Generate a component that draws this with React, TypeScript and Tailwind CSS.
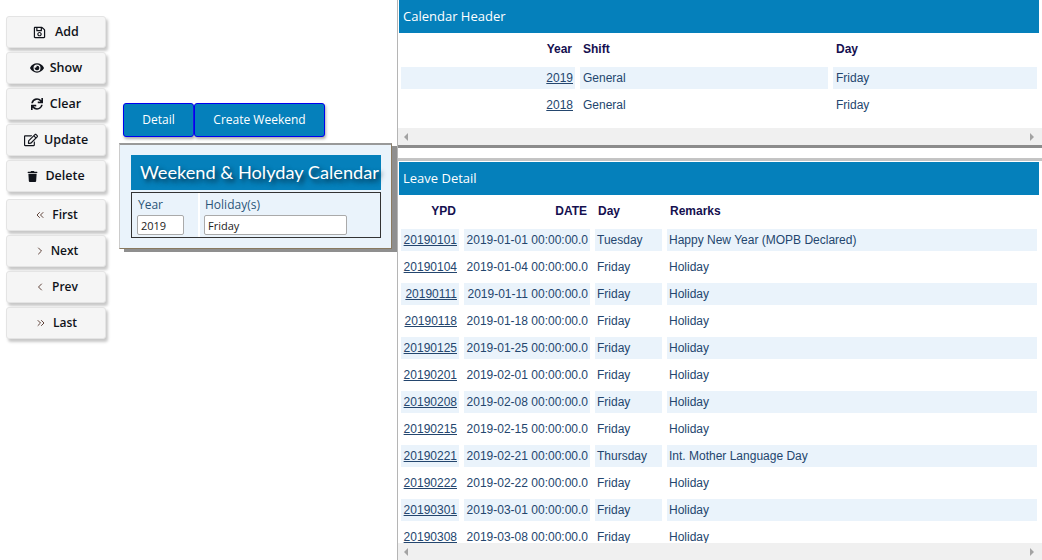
import React from "react";
import { FaRegSave, FaEye, FaSync, FaRegEdit, FaTrash } from "react-icons/fa";
import { ChevronsLeft, ChevronRight, ChevronLeft, ChevronsRight } from "lucide-react";

const firstButtons = [
  { label: "Add", icon: <FaRegSave size={13} />, gap: "gap-[9px]", size: "text-[12.5px]" },
  { label: "Show", icon: <FaEye size={14} />, gap: "gap-[6px]", size: "text-[12.5px]" },
  { label: "Clear", icon: <FaSync size={12} />, gap: "gap-[7px]", size: "text-[12.5px]" },
  { label: "Update", icon: <FaRegEdit size={14} />, gap: "gap-[6px]", size: "text-[12.5px]" },
  { label: "Delete", icon: <FaTrash size={11} />, gap: "gap-[7px]", size: "text-[12.5px]" },
];

const navButtons = [
  { label: "First", icon: <ChevronsLeft size={12} strokeWidth={1.75} className="text-[#4a2a20]" />, gap: "gap-[6px]", size: "text-[12px]" },
  { label: "Next", icon: <ChevronRight size={12} strokeWidth={1.75} className="text-[#4a2a20]" />, gap: "gap-[5px]", size: "text-[12px]" },
  { label: "Prev", icon: <ChevronLeft size={12} strokeWidth={1.75} className="text-[#4a2a20]" />, gap: "gap-[6px]", size: "text-[12px]" },
  { label: "Last", icon: <ChevronsRight size={12} strokeWidth={1.75} className="text-[#4a2a20]" />, gap: "gap-[6px]", size: "text-[12px]" },
];

const leaves = [
  ["20190101", "2019-01-01 00:00:00.0", "Tuesday", "Happy New Year (MOPB Declared)"],
  ["20190104", "2019-01-04 00:00:00.0", "Friday", "Holiday"],
  ["20190111", "2019-01-11 00:00:00.0", "Friday", "Holiday"],
  ["20190118", "2019-01-18 00:00:00.0", "Friday", "Holiday"],
  ["20190125", "2019-01-25 00:00:00.0", "Friday", "Holiday"],
  ["20190201", "2019-02-01 00:00:00.0", "Friday", "Holiday"],
  ["20190208", "2019-02-08 00:00:00.0", "Friday", "Holiday"],
  ["20190215", "2019-02-15 00:00:00.0", "Friday", "Holiday"],
  ["20190221", "2019-02-21 00:00:00.0", "Thursday", "Int. Mother Language Day"],
  ["20190222", "2019-02-22 00:00:00.0", "Friday", "Holiday"],
  ["20190301", "2019-03-01 00:00:00.0", "Friday", "Holiday"],
  ["20190308", "2019-03-08 00:00:00.0", "Friday", "Holiday"],
];

const ActionButton = ({ label, icon, gap, size }: { label: string; icon: React.ReactNode; gap: string; size: string }) => (
  <button className={`w-[100px] h-[32px] flex items-center justify-center ${gap} ${size} bg-[#f5f5f5] border border-[#e4e4e4] rounded-[3px] shadow-[2px_3px_3px_#c8c8c8] font-semibold text-[#10131a]`}>
    {icon}
    <span>{label}</span>
  </button>
);

const Cell = ({ children, shaded, right }: { children: React.ReactNode; shaded: boolean; right?: boolean }) => (
  <div className={`h-[22px] flex items-center whitespace-nowrap px-[2px] text-[#24466e] ${right ? "justify-end" : ""} ${shaded ? "bg-[#eaf3fb]" : ""}`}>
    {children}
  </div>
);

const HeadCell = ({ children, right }: { children: React.ReactNode; right?: boolean }) => (
  <div className={`h-[29px] pt-[2px] flex items-center px-[3px] font-bold text-[#15104f] ${right ? "justify-end" : ""}`}>
    {children}
  </div>
);

const Scrollbar = () => (
  <div className="h-[17px] bg-[#f0f0f0] flex items-center justify-between pl-[6px] pr-[8px]">
    <div className="w-0 h-0 border-y-[4px] border-y-transparent border-r-[4px] border-r-[#a3a3a3]" />
    <div className="w-0 h-0 border-y-[4px] border-y-transparent border-l-[4px] border-l-[#a3a3a3]" />
  </div>
);

const PanelHeader = ({ title }: { title: string }) => (
  <div className="h-[33px] bg-[#0580bb] ml-[1px] mr-[3px] px-[4px] flex items-center text-[13px] text-white font-['Open_Sans',sans-serif]">
    {title}
  </div>
);

const App = () => {
  return (
    <div className="w-[1042px] h-[560px] overflow-hidden bg-white flex font-['Liberation_Sans',sans-serif] text-[12px]">
      <div className="w-[119px] shrink-0 pl-[6px] pt-[16px] flex flex-col font-['Open_Sans',sans-serif]">
        <div className="flex flex-col gap-1">
          {firstButtons.map((b) => (
            <ActionButton key={b.label} {...b} />
          ))}
        </div>
        <div className="flex flex-col gap-1 mt-[7px]">
          {navButtons.map((b) => (
            <ActionButton key={b.label} {...b} />
          ))}
        </div>
      </div>

      <div className="w-[278px] shrink-0 pt-[103px] font-['Open_Sans',sans-serif]">
        <div className="flex pl-[4px] h-[34px]">
          <button className="w-[71px] bg-[#0580bb] border border-[#0000f0] rounded-[3px] text-white text-[12px] shadow-[1px_2px_3px_#aaa]">Detail</button>
          <button className="w-[131px] bg-[#0580bb] border border-[#0000f0] rounded-[3px] text-white text-[12px] shadow-[1px_2px_3px_#aaa]">Create Weekend</button>
        </div>
        <div className="mt-[6px] w-[273px] h-[106px] bg-[#eaf3fb] border-t-[2px] border-t-[#999] border-l border-l-[#ccc] border-r border-r-[#8a7a60] border-b border-b-[#8a7a60] shadow-[5px_3px_0_#8f8f8f] pt-[10px] pl-[11px]">
          <div className="w-[250px] h-[35px] bg-[#0580bb] flex items-center pl-[9px] text-[18.2px] text-white whitespace-nowrap font-['Lato',sans-serif] [text-shadow:3px_3px_5px_#06283d]">
            Weekend &amp; Holyday Calendar
          </div>
          <div className="mt-[2px] w-[250px] h-[46px] border border-[#333] bg-white grid grid-cols-[66px_1fr] text-[12px] text-[#2a5578]">
            <div className="bg-[#eaf3fb] pl-[5px] pt-[3px] leading-[17px]">
              <span className="pl-[1px]">Year</span>
              <div className="mt-[2px] w-[47px] h-[20px] bg-white border border-[#aaa] rounded-[2px] pl-[3px] text-[#222] leading-[19px] text-[11px]">2019</div>
            </div>
            <div className="bg-[#eaf3fb] ml-[2px] pl-[4px] pt-[3px] leading-[17px]">
              <span className="pl-[1px]">Holiday(s)</span>
              <div className="mt-[2px] w-[143px] h-[20px] bg-white border border-[#aaa] rounded-[2px] pl-[3px] text-[#222] leading-[19px] text-[11px]">Friday</div>
            </div>
          </div>
        </div>
      </div>

      <div className="flex-1 min-w-0 flex flex-col border-l-[1px] border-l-[#b5b5b5]">
        <div className="h-[148px] border-b-[3px] border-b-[#8c8c8c] flex flex-col">
          <PanelHeader title="Calendar Header" />
          <div className="flex-1 pl-[3px] pr-[5px]">
            <div className="grid grid-cols-[174px_248px_204px] gap-x-[5px] gap-y-[5px]">
              <HeadCell right>Year</HeadCell>
              <HeadCell>Shift</HeadCell>
              <HeadCell>Day</HeadCell>
              {["2019", "2018"].map((year, i) => (
                <React.Fragment key={year}>
                  <Cell shaded={i === 0} right>
                    <a className="underline text-[#24466e]" href="#">{year}</a>
                  </Cell>
                  <Cell shaded={i === 0}>
                    <span className="pl-[1px]">General</span>
                  </Cell>
                  <Cell shaded={i === 0}>
                    <span className="pl-[1px]">Friday</span>
                  </Cell>
                </React.Fragment>
              ))}
            </div>
          </div>
          <Scrollbar />
        </div>

        <div className="mt-[10px] flex-1 min-h-0 flex flex-col border-t-[3px] border-t-[#c4c4c4] pt-[1px]">
          <PanelHeader title="Leave Detail" />
          <div className="flex-1 min-h-0 overflow-hidden pl-[3px] pr-[5px]">
            <div className="grid grid-cols-[58px_126px_67px_370px] gap-x-[5px] gap-y-[5px]">
              <HeadCell right>YPD</HeadCell>
              <HeadCell right>DATE</HeadCell>
              <HeadCell>Day</HeadCell>
              <HeadCell>Remarks</HeadCell>
              {leaves.map((row, i) => (
                <React.Fragment key={row[0]}>
                  <Cell shaded={i % 2 === 0} right>
                    <a className="underline text-[#24466e]" href="#">{row[0]}</a>
                  </Cell>
                  <Cell shaded={i % 2 === 0} right>{row[1]}</Cell>
                  <Cell shaded={i % 2 === 0}>{row[2]}</Cell>
                  <Cell shaded={i % 2 === 0}>{row[3]}</Cell>
                </React.Fragment>
              ))}
            </div>
          </div>
          <Scrollbar />
        </div>
      </div>
    </div>
  );
};

export default App;
